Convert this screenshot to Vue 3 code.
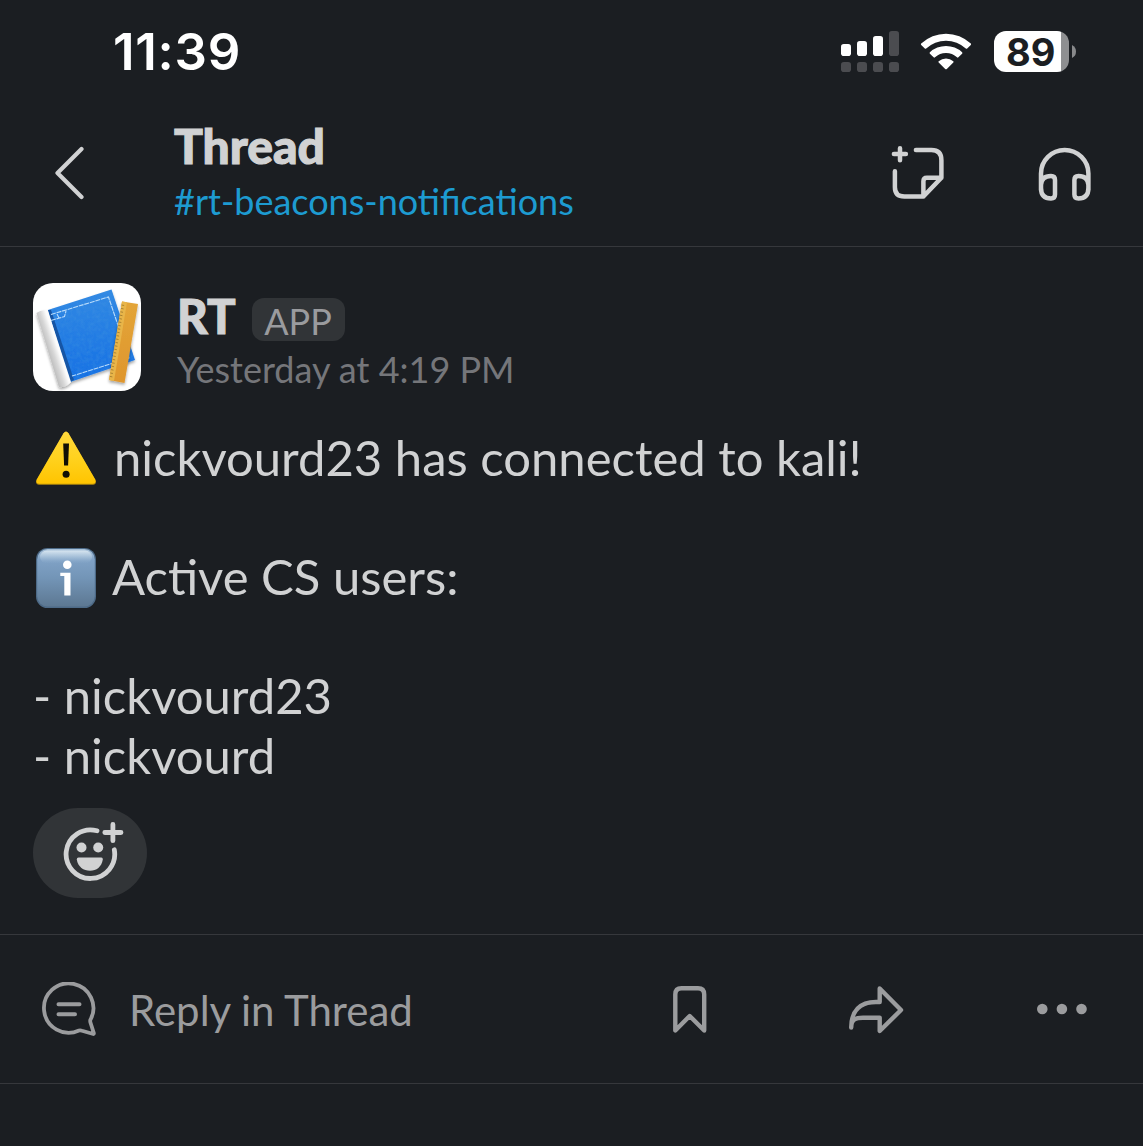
<script setup>
const bars = [12, 15, 20, 25]
const users = ['nickvourd23', 'nickvourd']
const ticks = Array.from({ length: 22 }, (_, i) => 4 + i * 3.4)
</script>

<template>
  <main class="screen">
    <div class="status">
      <span class="clock">11:39</span>
      <div class="indicators">
        <svg class="signal" width="58" height="41" viewBox="0 0 58 41">
          <g v-for="(h, i) in bars" :key="i">
            <rect :x="i * 16" :y="25 - h" width="10" :height="h" rx="2.8" :fill="i < 3 ? '#fff' : '#4b4c50'" />
            <rect :x="i * 16" y="31" width="10" height="10" rx="2.8" fill="#4b4c50" />
          </g>
        </svg>
        <svg class="wifi" width="52" height="38" viewBox="0 0 52 38">
          <path d="M1.2 11.6A36 36 0 0 1 50.8 11.6Q51.4 12.3 50.8 13L47.2 16.5Q46.5 17 45.8 16.5A28.9 28.9 0 0 0 6.2 16.5Q5.5 17 4.8 16.5L1.2 13Q.6 12.3 1.2 11.6Z" />
          <path d="M9.9 20.3A23.5 23.5 0 0 1 42.1 20.3Q42.8 21 42.1 21.7L38.4 25.3Q37.7 26 37 25.3A16.2 16.2 0 0 0 15 25.3Q14.3 26 13.6 25.3L9.9 21.7Q9.2 21 9.9 20.3Z" />
          <path d="M18.7 29.2A11.4 11.4 0 0 1 33.3 29.2Q34 29.9 33.3 30.6L26.8 37Q26 37.7 25.2 37L18.7 30.6Q18 29.9 18.7 29.2Z" />
        </svg>
        <div class="battery">
          <span class="cell">89</span>
          <svg width="4" height="13" viewBox="0 0 4 13"><path d="M0 0Q4 2 4 6.500Q4 11 0 13Z" fill="#88898b" /></svg>
        </div>
      </div>
    </div>

    <header class="header">
      <svg class="back" width="30" height="54" viewBox="0 0 30 54">
        <path d="M27.500 3L3.500 27L27.500 51" />
      </svg>
      <div class="titles">
        <h1>Thread</h1>
        <a>#rt-beacons-notifications</a>
      </div>
      <svg class="icon canvas-icon" width="56" height="56" viewBox="0 0 56 56">
        <path d="M4.500 8.300H16.500M10.600 2.500V14.500M26.500 4.300H42Q52 4.300 52 14.500V32L34 50.800H15Q5.500 50.800 5.500 41.500V25.500M34 50.800V35.500Q34 32 37.500 32H52" transform="translate(-.6 .7)" />
      </svg>
      <svg class="icon headphones" width="56" height="58" viewBox="0 0 56 58">
        <path d="M4 43V26.500A23.700 23.500 0 0 1 51.400 26.500V43M4 38Q4.500 29 14 29Q18 29 18 33V47.500Q18 51.500 14 51.500Q4 51.500 4 41M51.400 38Q50.900 29 41.400 29Q37.400 29 37.400 33V47.500Q37.400 51.500 41.400 51.500Q51.400 51.500 51.400 41" />
      </svg>
    </header>

    <article class="message">
      <div class="author">
        <svg class="avatar" width="108" height="108" viewBox="0 0 108 108">
          <defs>
            <linearGradient id="cover" x1="0" y1="0" x2="0" y2="1">
              <stop offset="0" stop-color="#3289e3" /><stop offset="1" stop-color="#1670e4" />
            </linearGradient>
            <linearGradient id="roll" gradientUnits="userSpaceOnUse" x1="14" y1="68" x2="29" y2="63">
              <stop offset="0" stop-color="#bdbdbd" /><stop offset=".35" stop-color="#d6d6d6" /><stop offset=".7" stop-color="#fbfbfb" /><stop offset="1" stop-color="#fff" />
            </linearGradient>
            <linearGradient id="ruler" x1="0" y1="0" x2="0" y2="1">
              <stop offset="0" stop-color="#e3a538" /><stop offset="1" stop-color="#df962d" />
            </linearGradient>
            <filter id="shade" x="-20%" y="-20%" width="140%" height="140%">
              <feDropShadow dx="0" dy="2" stdDeviation="1.600" flood-opacity=".35" />
            </filter>
            <filter id="grain" x="0" y="0" width="100%" height="100%">
              <feTurbulence type="fractalNoise" baseFrequency=".25" numOctaves="2" seed="4" />
              <feColorMatrix values="0 0 0 0 .05  0 0 0 0 .3  0 0 0 0 .75  1.600 0 0 0 -.6" />
              <feComposite in2="SourceGraphic" operator="in" />
            </filter>
          </defs>
          <rect width="108" height="108" fill="#fff" />
          <g filter="url(#shade)">
            <path d="M15 27L78.500 6.500L102 77L37 99Z" fill="url(#cover)" />
            <path d="M15 27L78.500 6.500L102 77L37 99Z" fill="#000" filter="url(#grain)" opacity=".5" />
            <path d="M15 27L18 27L41 97L37 99Z" fill="#1455a5" />
            <path d="M3.500 30Q9 26 15 28L38 99Q33 105 26 104Z" fill="url(#roll)" />
          </g>
          <path d="M18 31.500L75.500 14L96 75L39 93M18 37.500L31.500 33.500L33 28M24 31L26 35" fill="none" stroke="#b9dcfb" stroke-width="1.100" stroke-dasharray="5 .8" />
          <g filter="url(#shade)">
            <path d="M89 18.500L105 21L91.500 100L76 97Z" fill="url(#ruler)" />
            <path d="M89 18.500L94 19.200L81 98L76 97Z" fill="#e8b54a" />
          </g>
          <path v-for="t in ticks" :key="t" :d="`M${89.300 - t * 0.165} ${18 + t}l${2.500} .5`" stroke="#9a762d" stroke-width=".8" />
        </svg>
        <div class="meta">
          <div class="name-row"><strong>RT</strong><span class="tag">APP</span></div>
          <time>Yesterday at 4:19 PM</time>
        </div>
      </div>

      <div class="body">
        <p class="line">
          <svg class="emoji" width="60" height="60" viewBox="0 0 60 60">
            <defs><linearGradient id="warn" x1="0" y1="0" x2="0" y2="1"><stop offset="0" stop-color="#ffd83c" /><stop offset=".5" stop-color="#ffd21f" /><stop offset="1" stop-color="#ffc400" /></linearGradient></defs>
            <path d="M27.500 2.500Q30 -1 32.500 2.500L59.300 49Q61 53.600 57 53.800H3Q-1 53.600 .7 49Z" fill="#b98e0b" />
            <path d="M27.500 2.200Q30 -1.300 32.500 2.200L59.300 48.500Q60.500 52.600 57 52.800H3Q-.5 52.600 .7 48.500Z" fill="url(#warn)" />
            <path d="M27.200 12.500H33L32.100 34.500H28.100Z" fill="#100f05" /><circle cx="30.100" cy="43.300" r="3.500" fill="#100f05" />
          </svg>
          <span>nickvourd23 has connected to kali!</span>
        </p>
        <p class="line gap">
          <svg class="emoji info" width="60" height="60" viewBox="0 0 60 60">
            <defs>
              <linearGradient id="info" x1="0" y1="0" x2="0" y2="1"><stop offset="0" stop-color="#aac3da" /><stop offset=".2" stop-color="#7fa1c5" /><stop offset=".5" stop-color="#7395b7" /><stop offset="1" stop-color="#5d7892" /></linearGradient>
              <linearGradient id="gloss" x1="0" y1="0" x2="0" y2="1"><stop offset="0" stop-color="#d7e5f0" /><stop offset="1" stop-color="#9ebbd6" stop-opacity="0" /></linearGradient>
            </defs>
            <rect width="60" height="60" rx="11.500" fill="#4d6a87" />
            <rect x="1.200" y="1" width="57.600" height="57.500" rx="10.500" fill="url(#info)" />
            <rect x="4" y="2.500" width="52" height="13" rx="7" fill="url(#gloss)" />
            <circle cx="31.300" cy="16.700" r="4.300" fill="#fff" />
            <path d="M24.300 24.800H34.500V47.500H28.300V28H24.300Z" fill="#fff" />
          </svg>
          <span>Active CS users:</span>
        </p>
        <p v-for="(u, i) in users" :key="u" class="line user" :class="{ gap: i === 0 }">- {{ u }}</p>
      </div>

      <div class="react">
        <svg width="62" height="62" viewBox="0 0 62 62">
          <path d="M34 8.800A24.300 24.300 0 1 0 51.300 27.800M41.800 10.500H58M49.900 2.500V18.700" fill="none" stroke="#d1d2d3" stroke-width="4.800" stroke-linecap="round" />
          <circle cx="18.500" cy="25.500" r="5" fill="#d1d2d3" /><circle cx="35.200" cy="25.500" r="5" fill="#d1d2d3" />
          <path d="M15.500 35.500H38.300Q40 35.500 39.800 37.500C38.500 45 33.500 48.800 27 48.800S15 45 13.800 37.500Q13.700 35.500 15.500 35.500Z" fill="#d1d2d3" />
        </svg>
      </div>
    </article>

    <footer class="actions">
      <svg class="muted bubble" width="56" height="56" viewBox="0 0 56 56">
        <path d="M49.300 38A24.700 24.700 0 1 0 38 48.500Q39.500 48.200 41 48.700L52.300 52Q53 52 52.800 51L49.600 41Q49 39.500 49.300 38Z" stroke-width="3.800" />
        <path d="M17.500 22.300H38.500M17.500 32.300H34" stroke-width="4" />
      </svg>
      <span class="reply">Reply in Thread</span>
      <svg class="muted bookmark" width="34" height="48" viewBox="0 0 34 48">
        <path d="M2.300 44.500V8.500Q2.300 2.300 8.500 2.300H25Q31.200 2.300 31.200 8.500V44.500L16.700 30Z" />
      </svg>
      <svg class="muted share" width="56" height="48" viewBox="0 0 56 48">
        <path d="M31.700 2.500L53 24L31.700 45V31.800H15C8 31.800 3.200 33 3.200 41.500C3.200 25 12 16 28 16H31.700Z" />
      </svg>
      <svg class="dots" width="50" height="12" viewBox="0 0 50 12">
        <circle cx="5.300" cy="6" r="5.300" /><circle cx="24.900" cy="6" r="5.300" /><circle cx="44.500" cy="6" r="5.300" />
      </svg>
    </footer>
  </main>
</template>

<style>
body { background: #1b1d21; }
</style>

<style scoped>
* { box-sizing: border-box; }
.screen { width: 1143px; height: 1146px; overflow: hidden; background: #1b1e22; color: #d1d2d3; font-family: Lato, "Noto Sans", sans-serif; }
h1, p { margin: 0; font-weight: 400; }
svg { flex: none; display: block; }
.status { height: 104px; display: flex; justify-content: space-between; padding: 0 67px 0 113px; color: #fff; font-family: Inter, "Liberation Sans", sans-serif; }
.clock { margin-top: 22px; font-size: 51px; line-height: 60px; font-weight: 600; letter-spacing: .7px; white-space: nowrap; }
.indicators { display: flex; align-items: flex-start; padding-top: 31px; }
.wifi { margin: 1px 22px 0 21px; fill: #fff; }
.battery { display: flex; align-items: center; gap: 3px; }
.cell { width: 75px; height: 41px; border-radius: 12px; background: linear-gradient(90deg, #fff 67px, #8e8f91 67px); color: #1b1e22; font-size: 38px; line-height: 42px; font-weight: 700; padding-left: 12px; }
.header { height: 143px; border-bottom: 1px solid #36383c; display: flex; align-items: flex-start; padding-left: 54px; }
.back { margin-top: 42px; fill: none; stroke: #d1d2d3; stroke-width: 4.2; stroke-linecap: round; stroke-linejoin: round; }
.titles { width: 716px; margin-left: 90px; padding-top: 13px; white-space: nowrap; }
h1 { font-size: 48px; line-height: 58px; font-weight: 900; -webkit-text-stroke: 1.1px #d1d2d3; }
a { display: block; margin-top: 4px; font-size: 36px; line-height: 44px; color: #1d9bd1; }
.icon { fill: none; stroke: #d1d2d3; stroke-width: 4.5; stroke-linecap: round; stroke-linejoin: round; }
.canvas-icon { margin-top: 41px; }
.headphones { margin: 43px 0 0 91px; }
.message { height: 687px; padding: 36px 33px 0; }
.author { display: flex; height: 108px; }
.avatar { border-radius: 20px; }
.meta { margin-left: 36px; padding-top: 4px; white-space: nowrap; }
.name-row { display: flex; height: 58px; }
strong { width: 58px; font-size: 47.5px; line-height: 58px; font-weight: 900; -webkit-text-stroke: 1px #d1d2d3; }
.tag { width: 93px; height: 43px; margin: 11px 0 0 17px; padding-right: 1px; border-radius: 12px; background: #313437; color: #9a9b9e; font-size: 36px; line-height: 46px; text-align: center; }
time { display: block; margin-top: 2px; font-size: 36px; line-height: 44px; color: #75767a; }
.body { padding: 38px 3px 0 0; font-size: 49px; line-height: 59.5px; }
.line { display: flex; height: 59.5px; white-space: nowrap; }
.gap { margin-top: 59.5px; }
.line span { margin-top: -1px; }
.user { line-height: 57.5px; }
.emoji { margin: 2px 18px 0 3px; }
.info { margin: 0 16px 0 3px; }
.react { width: 114px; height: 90px; margin-top: 22px; border-radius: 45px; background: #313437; padding: 14px 0 0 30px; }
.actions { height: 150px; border-top: 1px solid #36383c; border-bottom: 1px solid #36383c; display: flex; align-items: center; padding-left: 41px; }
.muted { fill: none; stroke: #9b9c9e; stroke-width: 4.4; stroke-linecap: round; stroke-linejoin: round; }
.bubble { margin-top: 2px; }
.reply { width: 540px; margin: 1px 0 0 32px; font-size: 42px; line-height: 52px; color: #9b9c9e; white-space: nowrap; }
.bookmark { margin: 2px 0 0 4px; }
.share { margin: 1px 0 0 141px; }
.dots { margin-left: 133px; fill: #9b9c9e; }
</style>
